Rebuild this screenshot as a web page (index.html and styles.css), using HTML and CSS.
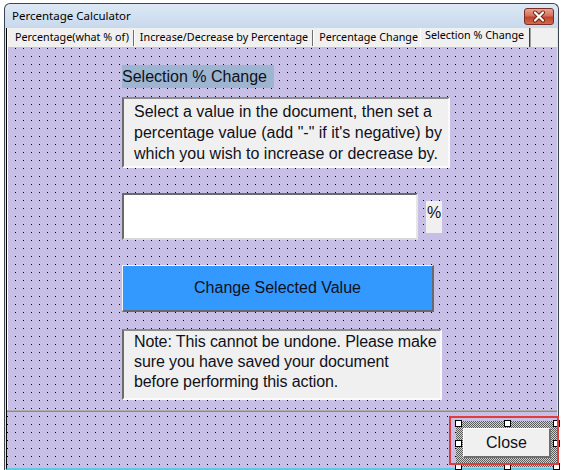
FILE: index.html
```html
<!DOCTYPE html>
<html>
<head>
<meta charset="utf-8">
<link rel="stylesheet" href="styles.css">
</head>
<body>
<div class="window">
  <div class="titlebar">
    <span class="title">Percentage Calculator</span>
    <span class="xbtn">
      <svg width="30" height="17" viewBox="0 0 30 17">
        <path d="M11 4.5 L19 12.5 M19 4.5 L11 12.5" stroke="#6b1f14" stroke-width="4" stroke-linecap="round"/>
        <path d="M11 4.5 L19 12.5 M19 4.5 L11 12.5" stroke="#ffffff" stroke-width="2.2" stroke-linecap="round"/>
      </svg>
    </span>
  </div>
  <div class="client">
    <div class="tabs">
      <span class="tab">Percentage(what % of)</span>
      <span class="tab">Increase/Decrease by Percentage</span>
      <span class="tab last">Percentage Change</span>
      <span class="tab active">Selection % Change</span>
    </div>
    <div class="page">
      <div class="heading">Selection % Change</div>
      <div class="box desc">Select a value in the document, then set a<br>percentage value (add "-" if it's negative) by<br>which you wish to increase or decrease by.</div>
      <div class="inputrow">
        <div class="input"></div>
        <div class="pct">%</div>
      </div>
      <div class="bigbtn">Change Selected Value</div>
      <div class="box note">Note: This cannot be undone. Please make<br>sure you have saved your document<br>before performing this action.</div>
    </div>
    <div class="sep"></div>
    <div class="footer">
      <div class="sel">
        <div class="closebtn">Close</div>
        <i class="h h1"></i><i class="h h2"></i><i class="h h3"></i>
        <i class="h h4"></i><i class="h h5"></i>
        <i class="h h6"></i><i class="h h7"></i><i class="h h8"></i>
      </div>
      <div class="highlight"></div>
    </div>
  </div>
</div>
</body>
</html>
```

FILE: styles.css
```css
html, body {
  margin: 0;
  padding: 0;
  background: #ffffff;
}
body {
  width: 565px;
  height: 470px;
  overflow: hidden;
}
.window {
  margin: 3px 0 0 4px;
  width: 555px;
  height: 467px;
  box-sizing: border-box;
  border: 1px solid #3c4650;
  border-bottom: 0;
  border-radius: 6px 6px 0 0;
  background: linear-gradient(#dde8f5, #c8d9ed 24px, #d9e5f2 26px, #d9e5f2);
  padding: 0 1px 0 1px;
  display: flex;
  flex-direction: column;
}
.titlebar {
  height: 24px;
  display: flex;
  align-items: center;
  justify-content: space-between;
  padding: 0 3px 0 6px;
}
.title {
  font-family: "Noto Sans", sans-serif;
  font-size: 11.5px;
  color: #000;
  margin-top: -1px;
}
.xbtn {
  width: 30px;
  height: 17px;
  margin-top: 1px;
  box-sizing: border-box;
  border: 1px solid #7a2f26;
  border-radius: 3px;
  background: linear-gradient(#e9a493, #d2705b 45%, #c1432c 55%, #d36a4c);
  display: flex;
  align-items: center;
  justify-content: center;
}
.xbtn svg {
  display: block;
  margin: -1px;
}
.client {
  flex: 1;
  display: flex;
  flex-direction: column;
  border-bottom: 2px solid #5fc9e2;
  border-left: 1px solid #000;
  background-color: #c7bfe5;
}
.tabs {
  height: 19px;
  background: #f0f0f0;
  border-left: 1px solid #ffffff;
  display: flex;
  align-items: flex-end;
  font-family: "Noto Sans", sans-serif;
  font-size: 10.75px;
  color: #000;
  padding-left: 5px;
}
.tab {
  flex-shrink: 0;
  white-space: nowrap;
  height: 16px;
  line-height: 15px;
  padding: 0 4px 0 2px;
  border-right: 1px solid #6f6f6f;
  box-shadow: 1px 0 0 #ffffff;
  margin-right: 4px;
  margin-bottom: 1px;
}
.tab.last {
  border-right: 0;
  box-shadow: none;
  margin-right: 0;
  padding-right: 2px;
}
.tab.active {
  height: 19px;
  line-height: 15px;
  margin-bottom: 0;
  padding: 0 5px 0 4px;
  border-right: 1px solid #3f3f3f;
  box-shadow: 1px 0 0 #a0a0a0;
  border-left: 1px solid #ffffff;
  margin-left: 0;
}
.page,
.footer {
  background-color: #c7bfe5;
  background-image:
    linear-gradient(90deg, #c7bfe5 7px, transparent 7px),
    linear-gradient(#c7bfe5 7px, #000000 7px);
  background-size: 8px 8px;
}
.page {
  flex: 1;
  border-left: 1px solid #ffffff;
  padding: 18px 0 0 114px;
  display: flex;
  flex-direction: column;
  align-items: flex-start;
  font-family: "Liberation Sans", Arial, sans-serif;
  font-size: 16px;
  color: #10101a;
  background-position: 0 2px;
}
.heading {
  width: 152px;
  height: 23px;
  line-height: 23px;
  background: #9db5d0;
  white-space: nowrap;
}
.box {
  background: #f0f0f0;
  box-sizing: border-box;
  height: 71px;
  border-top: 2px solid #8c8c8c;
  border-left: 2px solid #6c6c6c;
  border-right: 2px solid #fbfbfb;
  border-bottom: 2px solid #fbfbfb;
  line-height: 21px;
  padding: 2px 0 0 10px;
  white-space: nowrap;
}
.desc {
  width: 328px;
  margin-top: 9px;
}
.inputrow {
  display: flex;
  align-items: flex-start;
  margin-top: 25px;
}
.input {
  width: 296px;
  height: 47px;
  box-sizing: border-box;
  background: #ffffff;
  border-top: 2px solid #6a6a6a;
  border-left: 2px solid #6a6a6a;
  border-right: 2px solid #e6e6e6;
  border-bottom: 2px solid #d8d8d8;
}
.pct {
  margin: 8px 0 0 8px;
  width: 16px;
  height: 32px;
  background: #f0f0f0;
  line-height: 24px;
  text-align: center;
}
.bigbtn {
  margin-top: 25px;
  width: 312px;
  height: 47px;
  box-sizing: border-box;
  background: #3399ff;
  border-top: 1px solid #f4f4f4;
  border-left: 1px solid #f4f4f4;
  border-right: 2px solid #696969;
  border-bottom: 2px solid #696969;
  display: flex;
  align-items: center;
  justify-content: center;
}
.note {
  width: 320px;
  margin-top: 17px;
  line-height: 20px;
  padding-top: 1px;
  letter-spacing: -0.1px;
}
.sep {
  height: 2px;
  background: #8a8a8a;
  border-top: 1px solid #b0b0b0;
  box-sizing: border-box;
}
.footer {
  height: 56px;
  position: relative;
  display: flex;
  justify-content: flex-end;
  align-items: flex-start;
  padding-top: 9px;
  box-sizing: border-box;
  background-position: 1px 5px;
}
.sel {
  position: relative;
  width: 101px;
  height: 46px;
  box-sizing: border-box;
  padding: 7px 6px 0 7px;
  background: repeating-conic-gradient(#5a5a5a 0 25%, #d2cee6 0 50%) 0 0 / 2px 2px;
}
.closebtn {
  height: 30px;
  box-sizing: border-box;
  background: #f0f0f0;
  border-top: 1px solid #ffffff;
  border-left: 1px solid #ffffff;
  border-right: 2px solid #6e6e6e;
  border-bottom: 2px solid #6e6e6e;
  display: flex;
  align-items: center;
  justify-content: center;
  font-family: "Liberation Sans", Arial, sans-serif;
  font-size: 16px;
  color: #10101a;
}
.h {
  position: absolute;
  width: 5px;
  height: 5px;
  background: #ffffff;
  border: 1px solid #000;
}
.h1 { left: -1px; top: -1px; }
.h2 { left: 48px; top: -1px; }
.h3 { right: -3px; top: -1px; }
.h4 { left: -1px; top: 19px; }
.h5 { right: -3px; top: 19px; }
.h6 { left: -1px; bottom: -3px; }
.h7 { left: 48px; bottom: -3px; }
.h8 { right: -3px; bottom: -3px; }
.highlight {
  position: absolute;
  left: 442px;
  top: 4px;
  width: 110px;
  height: 49px;
  box-sizing: border-box;
  border: 2px solid #e23b3b;
}
```
